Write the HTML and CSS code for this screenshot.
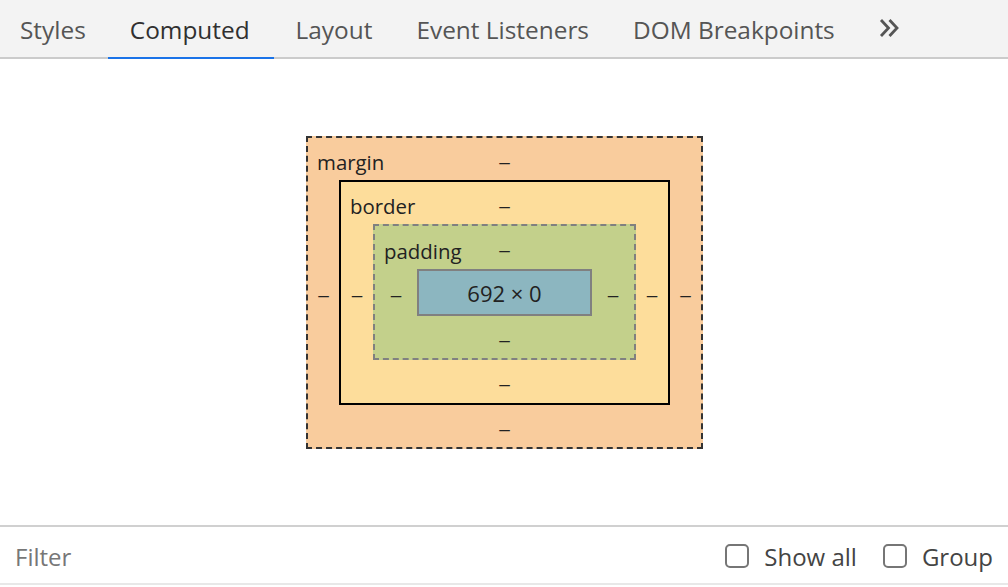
FILE: index.html
```html
<!DOCTYPE html>
<html>
<head>
<meta charset="utf-8">
<link rel="stylesheet" href="styles.css">
</head>
<body>
<div class="app">
  <div class="tabs">
    <div class="tab">Styles</div>
    <div class="tab active">Computed</div>
    <div class="tab">Layout</div>
    <div class="tab">Event Listeners</div>
    <div class="tab">DOM Breakpoints</div>
    <div class="more">
      <svg width="22" height="20" viewBox="0 0 22 20"><path d="M3 2 L10.5 10 L3 18 M11.5 2 L19 10 L11.5 18" fill="none" stroke="#555" stroke-width="2.8"/></svg>
    </div>
  </div>
  <div class="main">
    <div class="box margin">
      <div class="top"><span class="label">margin</span><span class="val">–</span></div>
      <div class="side">–</div>
      <div class="box border">
        <div class="top"><span class="label">border</span><span class="val">–</span></div>
        <div class="side">–</div>
        <div class="box padding">
          <div class="top"><span class="label">padding</span><span class="val">–</span></div>
          <div class="side">–</div>
          <div class="content">692 × 0</div>
          <div class="side">–</div>
          <div class="bottom">–</div>
        </div>
        <div class="side">–</div>
        <div class="bottom">–</div>
      </div>
      <div class="side">–</div>
      <div class="bottom">–</div>
    </div>
  </div>
  <div class="filterbar">
    <div class="filter">Filter</div>
    <label class="check"><span class="cb"></span>Show all</label>
    <label class="check"><span class="cb"></span>Group</label>
  </div>
</div>
</body>
</html>
```

FILE: styles.css
```css
html, body {
  margin: 0;
  padding: 0;
  background: #ffffff;
}
body {
  font-family: "Open Sans", "Noto Sans", sans-serif;
}
.app {
  width: 1008px;
  height: 587px;
  display: flex;
  flex-direction: column;
  overflow: hidden;
}
.tabs {
  height: 59px;
  box-sizing: border-box;
  background: #f3f3f3;
  border-bottom: 2px solid #cbcbcb;
  display: flex;
  align-items: stretch;
  flex: none;
}
.tab {
  height: 59px;
  box-sizing: border-box;
  margin-bottom: -2px;
  padding: 1px 22px 0;
  line-height: 57px;
  font-size: 24.4px;
  color: #555555;
  border-bottom: 2px solid transparent;
  white-space: nowrap;
}
.tab:first-child {
  padding-left: 20px;
}
.tab.active {
  color: #303030;
  border-bottom-color: #1a73e8;
  padding-right: 24px;
}
.tab.active + .tab {
  padding-left: 22px;
}
.more {
  display: flex;
  align-items: center;
  padding: 0 20px 0 21px;
  margin-top: -2px;
}
.main {
  flex: 1;
  display: flex;
  align-items: center;
  justify-content: center;
}
.box {
  display: grid;
  grid-template-columns: auto auto auto;
  grid-template-rows: auto auto auto;
  font-size: 20.4px;
  color: #222222;
}
.val, .side, .bottom {
  font-family: "Liberation Sans", Arial, sans-serif;
  font-size: 19px;
  box-sizing: border-box;
  padding-top: 5px;
}
.top {
  grid-column: 1 / 4;
  display: grid;
  align-items: center;
}
.top .label, .top .val {
  grid-area: 1 / 1;
}
.top .label {
  justify-self: start;
  padding-left: 9px;
  padding-top: 6px;
}
.top .val {
  justify-self: center;
}
.bottom {
  grid-column: 1 / 4;
  display: flex;
  align-items: center;
  justify-content: center;
}
.side {
  display: flex;
  align-items: center;
  justify-content: center;
}
.margin {
  background: #f9cc9d;
  border: 2px dashed #333333;
  margin-left: 1px;
  margin-top: 1px;
}
.margin > .top { height: 42px; }
.margin > .bottom { height: 42px; }
.margin > .side { width: 31px; }
.border {
  background: #fddd9b;
  border: 2px solid #000000;
}
.border > .top { height: 42px; }
.border > .bottom { height: 43px; }
.border > .side { width: 32px; }
.padding {
  background: #c3d08b;
  border: 2px dashed #808080;
}
.padding > .top { height: 43px; }
.padding > .bottom { height: 42px; }
.padding > .side { width: 42px; }
.content {
  width: 171px;
  height: 42px;
  background: #8cb6c0;
  border: 2px solid #808080;
  display: flex;
  align-items: center;
  justify-content: center;
  font-size: 22px;
  padding-top: 1px;
  box-sizing: content-box;
}
.filterbar {
  flex: none;
  box-sizing: content-box;
  height: 54px;
  padding-top: 2px;
  border-top: 2px solid #d0d0d0;
  border-bottom: 2px solid #e8e8e8;
  margin-bottom: 2px;
  display: flex;
  align-items: center;
  font-size: 24px;
}
.filter {
  flex: 1;
  padding-left: 15px;
  color: #777777;
}
.check {
  display: flex;
  align-items: center;
  color: #444444;
  margin-right: 15px;
}
.check + .check {
  margin-left: 11px;
}
.cb {
  width: 24px;
  height: 24px;
  box-sizing: border-box;
  border: 2px solid #767676;
  border-radius: 5px;
  margin-right: 15px;
  background: #ffffff;
}
```
